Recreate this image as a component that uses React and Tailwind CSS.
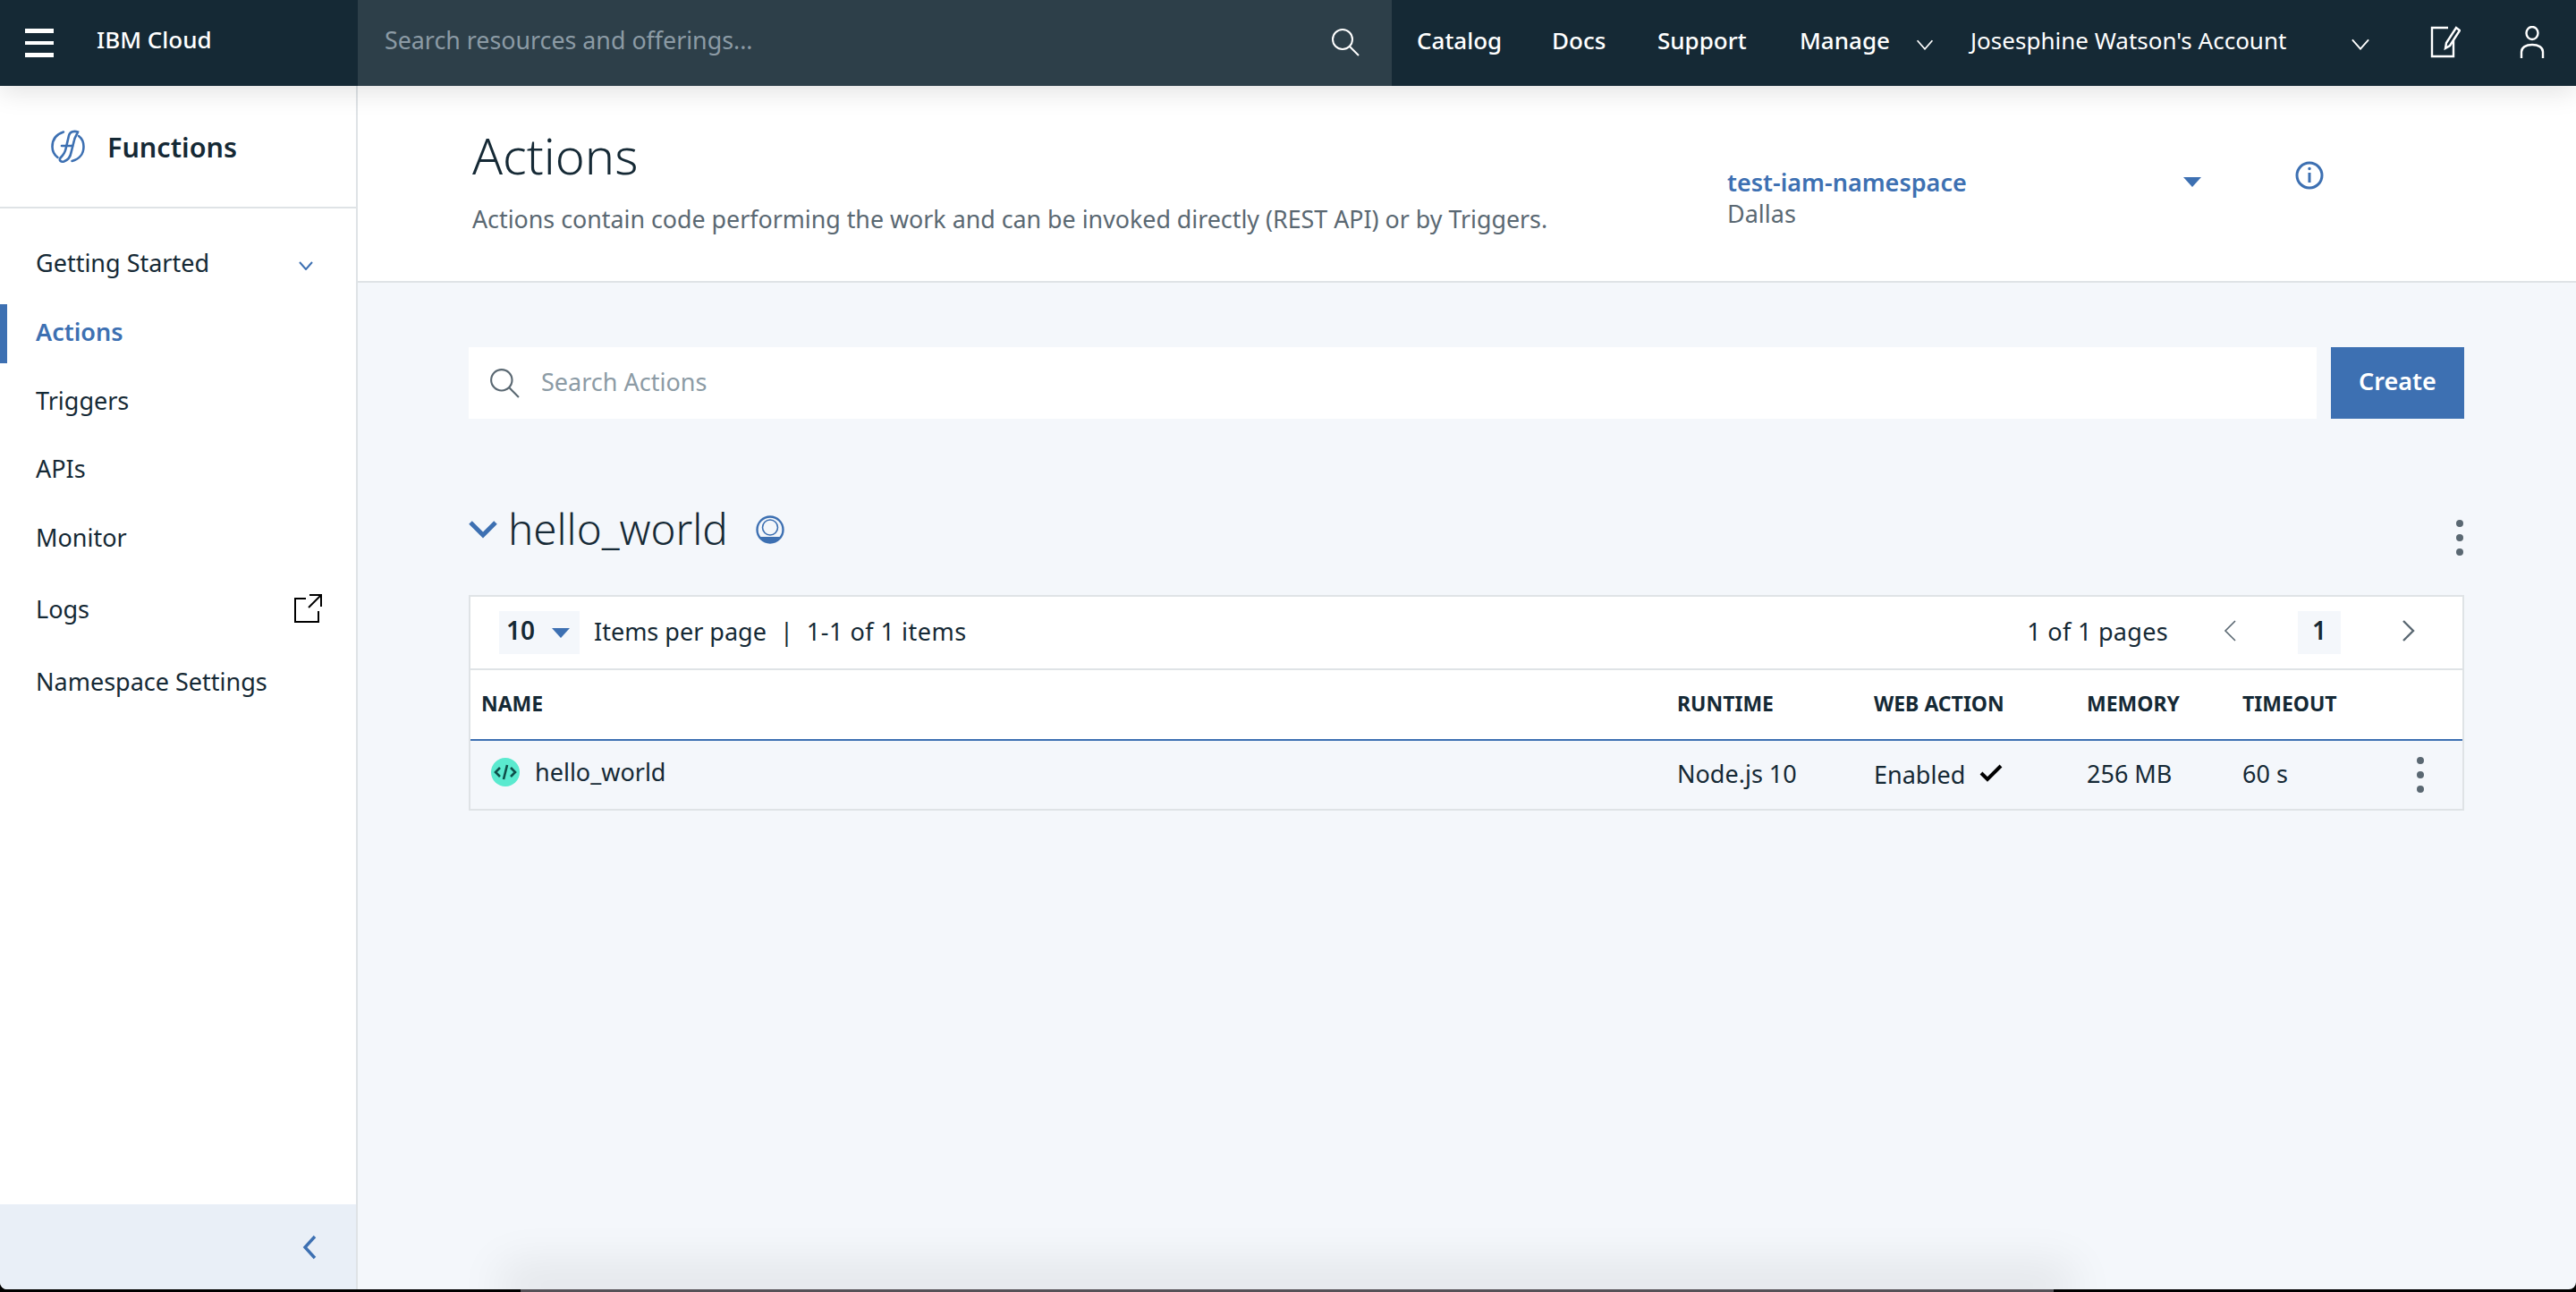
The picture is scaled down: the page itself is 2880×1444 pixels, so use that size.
import React from 'react';

const font = "font-['Noto_Sans',sans-serif]";

const Chevron = ({ className, d = 'M1 1l7 8 7-8', width = 2, box = '0 0 16 10' }) => (
  <svg className={className} viewBox={box} fill="none" stroke="currentColor" strokeWidth={width}>
    <path d={d} />
  </svg>
);

const Caret = ({ className }) => (
  <svg className={className} viewBox="0 0 20 11" fill="currentColor">
    <path d="M0 0h20L10 11z" />
  </svg>
);

const Dots = ({ className }) => (
  <div className={`flex flex-col gap-[8px] ${className}`}>
    <div className="w-[8px] h-[8px] rounded-full bg-[#5a6872]" />
    <div className="w-[8px] h-[8px] rounded-full bg-[#5a6872]" />
    <div className="w-[8px] h-[8px] rounded-full bg-[#5a6872]" />
  </div>
);

const SearchIcon = ({ className }) => (
  <svg className={className} viewBox="0 0 32 32" fill="none" stroke="currentColor" strokeWidth={2}>
    <circle cx="13" cy="13" r="11" />
    <path d="M21 21l10 10" />
  </svg>
);

const FunctionsIcon = () => (
  <svg className="w-[38px] h-[38px] text-[#3d70b2]" viewBox="0 0 38 38" fill="none" stroke="currentColor" strokeWidth={2.6} strokeLinecap="round">
    <path d="M14 2.500C6 5 1.500 11 1.500 19c0 5 2 9 6 12" />
    <path d="M31 7c4 3 5.500 7 5.500 12 0 8-5 14-13 16" />
    <path d="M30 2.500c-4-1.500-9-.5-10 4l-3.500 15c-1 5-3 7-6 10-2 3 1 5 4 4 4-1.500 7-4 8-10l3.500-14c.5-3 2.500-5 4-9z" />
    <path d="M12 18h12" />
  </svg>
);

const SideItem = ({ label, active, right, h = 'h-[76px]' }) => (
  <div className={`relative ${h} flex items-center justify-between pl-[40px] pr-[40px] text-[27px] ${active ? 'text-[#3d70b2] font-semibold' : 'text-[#152935]'}`}>
    {active && <div className="absolute left-0 top-[8px] bottom-[4px] w-[8px] bg-[#3d70b2]" />}
    <span>{label}</span>
    {right}
  </div>
);

const TopLink = ({ children, className }) => (
  <span className={`text-white text-[26px] font-medium ${className}`}>{children}</span>
);

const Th = ({ children }) => (
  <div className="text-[23px] font-bold text-[#152935] -mt-[3px]">{children}</div>
);

export default function App() {
  return (
    <div className={`relative w-[2880px] h-[1444px] overflow-hidden bg-black flex flex-col ${font}`}>
      {/* top bar */}
      <header className="relative z-10 h-[96px] shrink-0 bg-[#152935] flex items-stretch shadow-[0_6px_28px_rgba(0,0,0,0.12)]">
        <div className="w-[400px] flex items-center pl-[28px] gap-[48px]">
          <div className="flex flex-col gap-[9px] w-[32px]">
            <div className="h-[5px] bg-white" />
            <div className="h-[4px] bg-white" />
            <div className="h-[5px] bg-white" />
          </div>
          <span className="text-white text-[26px] font-medium -mt-[7px]">IBM Cloud</span>
        </div>
        <div className="w-[1156px] bg-[#2d3f49] flex items-center justify-between pl-[30px] pr-[36px]">
          <span className="text-[#8c9ba5] text-[26.800px] -mt-[6px]">Search resources and offerings...</span>
          <SearchIcon className="w-[32px] h-[32px] text-white -mt-[2px]" />
        </div>
        <div className="flex-1 flex items-center pl-[28px] -mt-[3px]">
          <TopLink className="w-[151px] block -mt-[3px]">Catalog</TopLink>
          <TopLink className="w-[118px] block -mt-[3px]">Docs</TopLink>
          <TopLink className="w-[159px] block -mt-[3px]">Support</TopLink>
          <TopLink className="w-[130px] block -mt-[3px]">Manage</TopLink>
          <Chevron className="w-[20px] h-[12px] text-white mt-[6px]" width={1.4} />
          <span className="text-white text-[26px] ml-[41px] w-[425px] -mt-[3px]">Josesphine Watson's Account</span>
          <Chevron className="w-[22px] h-[13px] text-white mt-[6px]" width={1.4} />
          <svg className="w-[34px] h-[36px] ml-[67px] text-white" viewBox="0 0 34 36" fill="none" stroke="currentColor" strokeWidth={2.4}>
            <path d="M20 2H2v32h24V16" />
            <path d="M29 2l4 3-11 17-5 3 1-6z" />
          </svg>
          <svg className="w-[28px] h-[36px] ml-[66px] text-white" viewBox="0 0 28 36" fill="none" stroke="currentColor" strokeWidth={2.4}>
            <ellipse cx="14" cy="8" rx="6.500" ry="7" />
            <path d="M2 36V29c0-5 5-8 12-8s12 3 12 8v7" />
          </svg>
        </div>
      </header>

      <div className="flex-1 flex min-h-0 rounded-b-[8px] overflow-hidden">
        {/* sidebar */}
        <aside className="w-[400px] shrink-0 bg-white border-r-2 border-[#dfe3e6] flex flex-col">
          <div className="h-[137px] shrink-0 border-b-2 border-[#dfe3e6] flex items-center pl-[57px] gap-[25px]">
            <FunctionsIcon />
            <span className="text-[30.500px] font-semibold text-[#152935] mt-[2px]">Functions</span>
          </div>
          <div className="pt-[23px] flex flex-col">
            <SideItem
              label="Getting Started"
              right={<Chevron className="w-[16px] h-[10px] text-[#3d70b2] mr-[8px] mt-[6px]" />}
            />
            <SideItem label="Actions" active h="h-[78px]" />
            <SideItem label="Triggers" />
            <SideItem label="APIs" h="h-[77px]" />
            <SideItem label="Monitor" />
            <SideItem
              label="Logs"
              h="h-[85px]"
              right={
                <svg className="w-[32px] h-[32px] text-black -mr-[2px] -mt-[4px]" viewBox="0 0 32 32" fill="none" stroke="currentColor" strokeWidth={2}>
                  <path d="M14 5H2v26h26V19" />
                  <path d="M18 1h13v13" strokeWidth={2} />
                  <path d="M31 1L17 15" />
                </svg>
              }
            />
            <SideItem label="Namespace Settings" />
          </div>
          <div className="mt-auto h-[95px] bg-[#e9eff7] flex items-center justify-end pr-[44px]">
            <Chevron className="w-[16px] h-[28px] text-[#3d70b2]" box="0 0 16 28" d="M14 2L3 14l11 12" width={3.4} />
          </div>
        </aside>

        {/* main */}
        <main className="flex-1 bg-[#f4f7fb] flex flex-col min-w-0">
          <div className="h-[220px] shrink-0 bg-white border-b-2 border-[#dfe3e6] flex pl-[128px]">
            <div className="w-[1403px] pt-[43px]">
              <h1 className="text-[56px] leading-[68px] font-light text-[#152935]">Actions</h1>
              <p className="text-[26.800px] leading-[36px] text-[#5a6872] mt-[20px]">
                Actions contain code performing the work and can be invoked directly (REST API) or by Triggers.
              </p>
            </div>
            <div className="w-[510px] pt-[90px]">
              <div className="text-[27px] leading-[36px] font-semibold text-[#3d70b2]">test-iam-namespace</div>
              <div className="text-[27px] leading-[34px] text-[#5a6872]">Dallas</div>
            </div>
            <Caret className="w-[20px] h-[11px] text-[#3d70b2] mt-[102px]" />
            <svg className="w-[32px] h-[32px] text-[#3d70b2] ml-[105px] mt-[84px]" viewBox="0 0 32 32" fill="none" stroke="currentColor" strokeWidth={3}>
              <circle cx="16" cy="16" r="14" />
              <path d="M16 13v11" />
              <circle cx="16" cy="8.500" r="1" fill="currentColor" strokeWidth={1.5} />
            </svg>
          </div>

          <div className="pl-[124px] pr-[125px] pt-[72px]">
            {/* search + create */}
            <div className="flex gap-[16px]">
              <div className="flex-1 h-[80px] bg-white flex items-center pl-[23px] gap-[24px]">
                <SearchIcon className="w-[34px] h-[34px] text-[#5a6872]" />
                <span className="text-[27px] text-[#8c9ba5] -mt-[2px]">Search Actions</span>
              </div>
              <div className="w-[149px] h-[80px] bg-[#3d70b2] flex items-center justify-center text-white text-[27px] font-semibold">
                <span className="-mt-[3px]">Create</span>
              </div>
            </div>

            {/* package header */}
            <div className="flex items-center mt-[90px] h-[70px]">
              <Chevron className="w-[32px] h-[20px] text-[#3d70b2] -mt-[3px]" box="0 0 32 20" d="M2 2l14 14L30 2" width={5} />
              <span className="text-[47.500px] font-light text-[#152935] ml-[12px] -mt-[4px]">hello_world</span>
              <svg className="w-[32px] h-[32px] ml-[31px] text-[#3d70b2] -mt-[2px]" viewBox="0 0 32 32" fill="none">
                <circle cx="16" cy="16" r="14.500" stroke="currentColor" strokeWidth={2.4} />
                <circle cx="16" cy="13.500" r="8.500" stroke="currentColor" strokeWidth={1.6} />
                <path d="M4 24h24a14.500 14.500 0 0 1-24 0z" fill="currentColor" />
              </svg>
              <Dots className="ml-auto mr-[1px] mt-[16px]" />
            </div>

            {/* table */}
            <div className="mt-[37px] border-2 border-[#dfe3e6] bg-white">
              <div className="h-[82px] flex items-center pl-[32px] pr-[52px] border-b-2 border-[#dfe3e6] text-[27px] text-[#152935]">
                <div className="w-[90px] h-[48px] bg-[#f4f7fb] flex items-center pl-[8px] gap-[19px]">
                  <span className="text-[28px] font-semibold -mt-[6px]">10</span>
                  <Caret className="w-[20px] h-[11px] text-[#3d70b2]" />
                </div>
                <span className="ml-[16px] -mt-[2px]">Items per page</span>
                <span className="ml-[15px] -mt-[2px]">|</span>
                <span className="ml-[15px] -mt-[2px] tracking-[0.5px]">1-1 of 1 items</span>
                <span className="ml-auto -mt-[2px] tracking-[0.3px]">1 of 1 pages</span>
                <Chevron className="w-[16px] h-[24px] text-[#5a6872] ml-[61px] -mt-[4px]" box="0 0 16 24" d="M14 1L3 12l11 11" width={1.6} />
                <div className="w-[48px] h-[48px] bg-[#f4f7fb] ml-[68px] flex items-center justify-center">
                  <span className="text-[28px] font-semibold -mt-[6px]">1</span>
                </div>
                <Chevron className="w-[17px] h-[24px] text-[#5a6872] ml-[67px] -mt-[4px]" box="0 0 17 24" d="M3 1l11 11L3 23" width={2.4} />
              </div>
              <div className="h-[79px] grid grid-cols-[1337px_220px_238px_174px_1fr] items-center pl-[12px] border-b-2 border-[#3d70b2]">
                <Th>NAME</Th>
                <Th>RUNTIME</Th>
                <Th>WEB ACTION</Th>
                <Th>MEMORY</Th>
                <Th>TIMEOUT</Th>
              </div>
              <div className="h-[76px] bg-[#f4f7fb] grid grid-cols-[1337px_220px_238px_174px_1fr] items-center pl-[12px] text-[27px] text-[#152935]">
                <div className="flex items-center pl-[11px] gap-[17px] -mt-[6px]">
                  <svg className="w-[32px] h-[32px]" viewBox="0 0 32 32">
                    <circle cx="16" cy="16" r="16" fill="#5aeacf" />
                    <path d="M10 11l-5 5 5 5M22 11l5 5-5 5M18 8l-4 16" fill="none" stroke="#0f4f4a" strokeWidth={2.6} />
                  </svg>
                  <span>hello_world</span>
                </div>
                <div className="-mt-[2px]">Node.js 10</div>
                <div className="flex items-center gap-[16px]">
                  <span className="mt-[1px]">Enabled</span>
                  <svg className="w-[26px] h-[20px] text-black -mt-[4px]" viewBox="0 0 26 20" fill="none" stroke="currentColor" strokeWidth={4}>
                    <path d="M2 10l7 7L24 2" />
                  </svg>
                </div>
                <div className="-mt-[2px]">256 MB</div>
                <div className="flex items-center justify-between pr-[43px]">
                  <span className="-mt-[2px]">60 s</span>
                  <Dots />
                </div>
              </div>
            </div>
          </div>
        </main>
      </div>

      {/* bottom window edge */}
      <div className="h-[3px] shrink-0 bg-black" />
      <div className="absolute left-[582px] bottom-0 w-[1714px] h-[3px] bg-[#555157] shadow-[0_-6px_50px_22px_rgba(0,0,0,0.08)]" />
    </div>
  );
}
